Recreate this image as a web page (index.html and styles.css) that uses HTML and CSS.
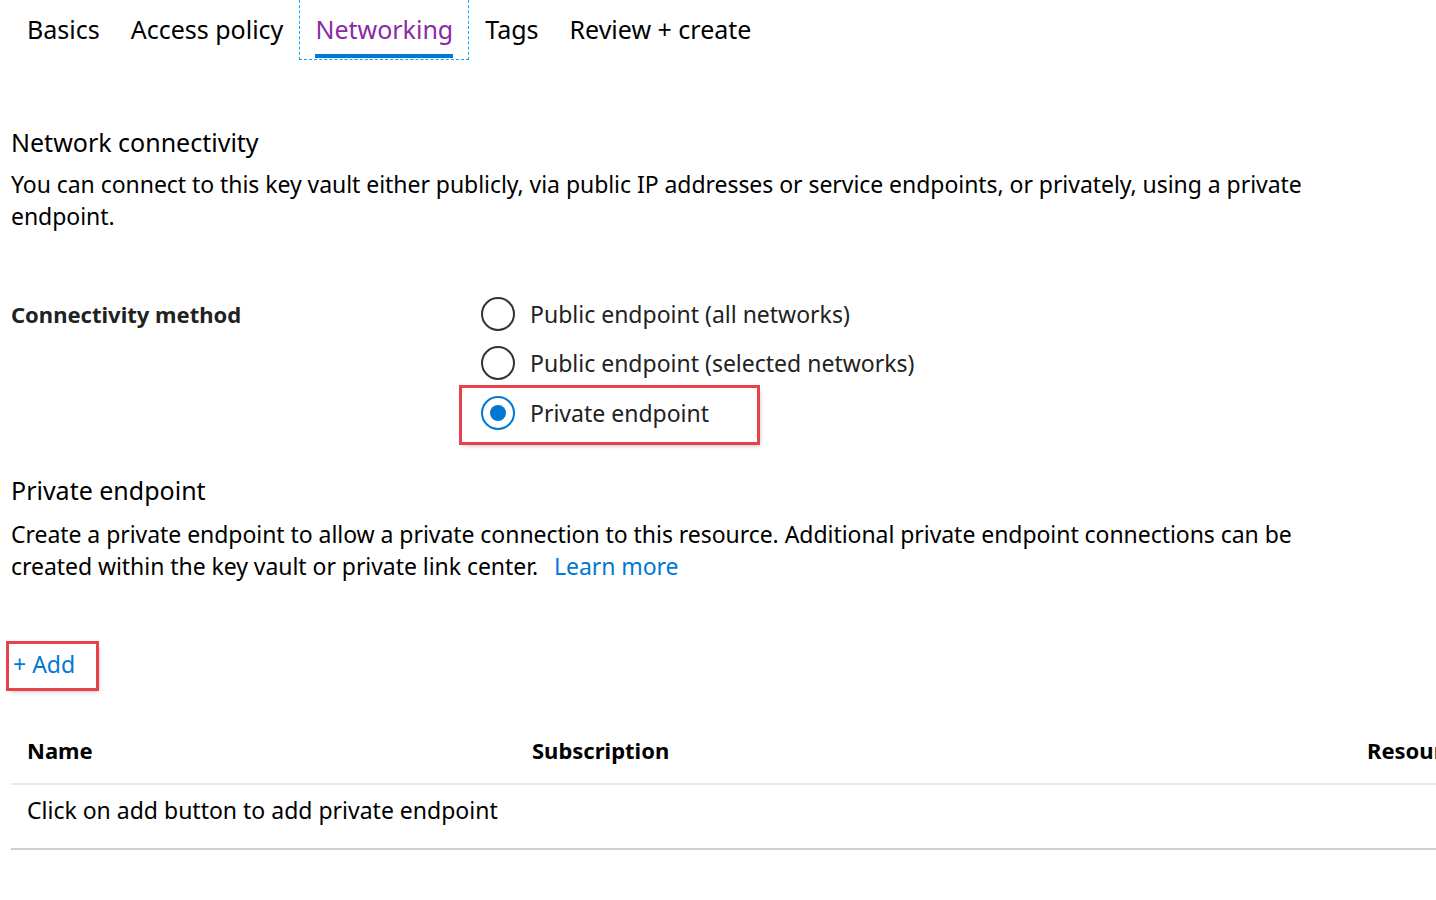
FILE: index.html
```html
<!DOCTYPE html>
<html lang="en">
<head>
<meta charset="utf-8">
<title>Networking</title>
<link rel="stylesheet" href="styles.css">
</head>
<body>
<nav class="tabs">
  <a class="tab">Basics</a>
  <a class="tab">Access policy</a>
  <a class="tab tab-active"><span class="tab-label">Networking</span></a>
  <a class="tab">Tags</a>
  <a class="tab">Review + create</a>
</nav>

<section class="section section-net">
  <h2 class="section-title">Network connectivity</h2>
  <p class="section-text">You can connect to this key vault either publicly, via public IP addresses or service endpoints, or privately, using a private endpoint.</p>
</section>

<div class="field">
  <div class="field-label">Connectivity method</div>
  <div class="radio-group">
    <label class="radio"><span class="radio-circle"></span><span class="radio-text">Public endpoint (all networks)</span></label>
    <label class="radio"><span class="radio-circle"></span><span class="radio-text">Public endpoint (selected networks)</span></label>
    <label class="radio radio-checked highlight"><span class="radio-circle"><span class="radio-dot"></span></span><span class="radio-text">Private endpoint</span></label>
  </div>
</div>

<section class="section section-pe">
  <h2 class="section-title">Private endpoint</h2>
  <p class="section-text">Create a private endpoint to allow a private connection to this resource. Additional private endpoint connections can be created within the key vault or private link center. <a class="link">Learn more</a></p>
</section>

<div class="add-row">
  <a class="add-btn highlight">+ Add</a>
</div>

<div class="grid">
  <div class="grid-head">
    <div class="col col-name">Name</div>
    <div class="col col-sub">Subscription</div>
    <div class="col col-res">Resource group</div>
  </div>
  <div class="grid-row">Click on add button to add private endpoint</div>
</div>
</body>
</html>
```

FILE: styles.css
```css
html, body {
  margin: 0;
  padding: 0;
  background: #ffffff;
  overflow: hidden;
}
body {
  width: 1436px;
  height: 900px;
  font-family: "Noto Sans", "Open Sans", sans-serif;
  color: #000000;
}

.tabs {
  display: flex;
  align-items: stretch;
  height: 60px;
  padding-left: 11px;
}
.tab {
  display: flex;
  align-items: center;
  padding: 0 15px 0 16px;
  font-size: 25px;
  color: #000;
  height: 58px;
  box-sizing: border-box;
}
.tab-active {
  border: 1px dashed #12a9e8;
  border-top: none;
  padding: 0 15px 0 15px;
  margin-left: 1px;
  height: 60px;
  position: relative;
  color: #8a2aa6;
}
.tab-label {
  position: relative;
  display: inline-block;
  padding-top: 2px;
  padding-bottom: 4px;
}
.tab-label::after {
  content: "";
  position: absolute;
  left: 0;
  right: 0;
  bottom: -8px;
  height: 4px;
  background: #0078d4;
}

.section {
  padding-left: 11px;
  padding-right: 120px;
}
.section-net {
  margin-top: 64px;
}
.section-title {
  margin: 0;
  font-size: 25px;
  font-weight: 400;
  line-height: 36px;
}
.section-text {
  margin: 8px 0 0 0;
  font-size: 23px;
  line-height: 32px;
  letter-spacing: -0.05px;
}
.link {
  color: #0078d4;
  margin-left: 10px;
}

.field {
  display: flex;
  margin-top: 66px;
  padding-left: 11px;
}
.field-label {
  width: 470px;
  flex: none;
  font-size: 22px;
  font-weight: 700;
  line-height: 32px;
  color: #222;
}
.radio-group {
  display: flex;
  flex-direction: column;
  align-items: flex-start;
  gap: 17px;
}
.radio {
  display: flex;
  align-items: center;
  gap: 15px;
  font-size: 23px;
  line-height: 32px;
  color: #222;
  height: 32px;
}
.radio-circle {
  width: 30px;
  height: 30px;
  border: 2px solid #333;
  border-radius: 50%;
  display: flex;
  align-items: center;
  justify-content: center;
  flex: none;
}
.radio-checked .radio-circle {
  border-color: #0078d4;
}
.radio-dot {
  width: 16px;
  height: 16px;
  border-radius: 50%;
  background: #0078d4;
}
.highlight {
  outline: 3px solid #e8414a;
  box-shadow: 2px 3px 5px rgba(0, 0, 0, 0.35);
}
.radio-checked {
  margin: -8px 0 -12px -19px;
  padding: 8px 48px 12px 19px;
  height: auto;
}

.section-pe {
  margin-top: 44px;
}
.section-pe .section-title {
  line-height: 32px;
}
.section-pe .section-text {
  margin-top: 12px;
}

.add-row {
  display: flex;
  padding-left: 9px;
  margin-top: 62px;
}
.add-btn {
  display: block;
  color: #0078d4;
  font-size: 23px;
  line-height: 40px;
  padding: 0 21px 4px 4px;
}

.grid {
  margin-top: 29px;
  margin-left: 11px;
}
.grid-head {
  display: flex;
  height: 66px;
  align-items: center;
  border-bottom: 2px solid #e8e8e8;
  font-size: 22px;
  font-weight: 700;
  white-space: nowrap;
  overflow: hidden;
}
.col {
  flex: none;
}
.col-name {
  width: 505px;
  padding-left: 16px;
}
.col-sub {
  width: 835px;
}
.grid-row {
  padding: 9px 0 22px 16px;
  line-height: 32px;
  font-size: 23px;
  border-bottom: 2px solid #cfcfcf;
}
```
